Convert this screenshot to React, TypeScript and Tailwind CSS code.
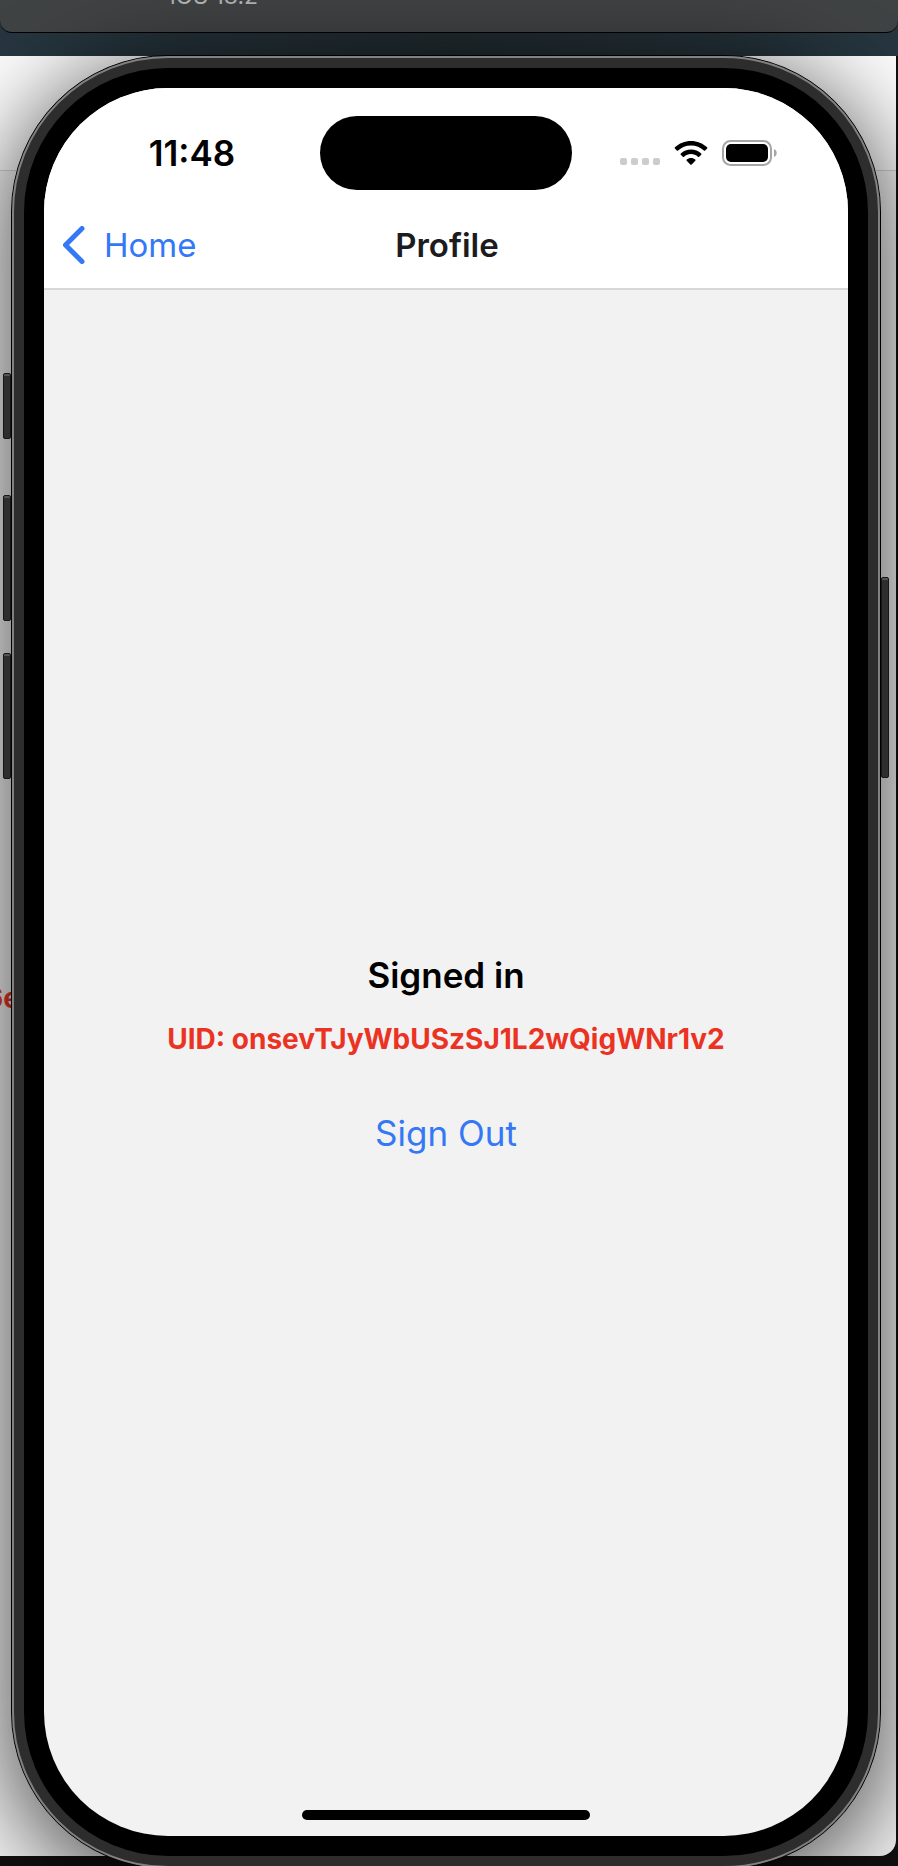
import React from "react";

function WifiIcon() {
  return (
    <svg width="34" height="26" viewBox="0 0 34 26" fill="#000" aria-hidden="true">
      <path d="M17 1C10.800 1 5.100 3.400 0.900 7.300c-.4.400-.4.900 0 1.300l1.900 1.900c.4.400.9.400 1.300 0C7.500 7.400 12 5.500 17 5.500s9.500 1.900 12.900 5c.4.400.9.400 1.300 0l1.900-1.900c.4-.4.400-.9 0-1.300C28.900 3.400 23.200 1 17 1z" />
      <path d="M17 9.500c-3.900 0-7.500 1.500-10.200 4-.4.400-.4.900 0 1.300l2 1.900c.4.400.9.400 1.300 0 1.800-1.700 4.200-2.700 6.900-2.700s5.100 1 6.900 2.700c.4.400.9.400 1.300 0l2-1.900c.4-.4.400-.9 0-1.300-2.700-2.500-6.300-4-10.200-4z" />
      <path d="M17 18c-1.600 0-3.100.6-4.300 1.500-.4.400-.4.900 0 1.300l3.600 3.600c.4.400 1 .4 1.400 0l3.600-3.600c.4-.4.400-.9 0-1.300C20.100 18.600 18.600 18 17 18z" />
    </svg>
  );
}

function BatteryIcon() {
  return (
    <svg width="56" height="26" viewBox="0 0 56 26" aria-hidden="true">
      <rect x="1" y="1" width="48" height="24" rx="7.500" fill="none" stroke="#a6a6a6" strokeWidth="2" />
      <rect x="4" y="4" width="42" height="18" rx="5" fill="#000" />
      <path d="M52 9v8c1.700-.7 2.700-2.200 2.700-4S53.700 9.700 52 9z" fill="#a6a6a6" />
    </svg>
  );
}

function StatusBar() {
  return (
    <div className="grid h-[114px] grid-cols-[1fr_252px_1fr] items-start pt-7">
      <div className="flex h-[74px] items-center justify-center pl-5">
        <time className="text-[35px] leading-[40px] font-semibold text-black">11:48</time>
      </div>
      <div className="h-[74px] rounded-[37px] bg-black" />
      <div className="flex h-[74px] items-center pl-12">
        <div className="flex gap-1 pt-4">
          {[0, 1, 2, 3].map((dot) => (
            <span key={dot} className="size-[7px] rounded-[2px] bg-[#cccccc]" />
          ))}
        </div>
        <div className="flex pl-[14px]">
          <WifiIcon />
        </div>
        <div className="flex pl-[14px]">
          <BatteryIcon />
        </div>
      </div>
    </div>
  );
}

function NavigationBar() {
  return (
    <nav className="grid h-[88px] grid-cols-3 items-center border-b-2 border-[#d8d8d8] pr-4 pl-[18px]">
      <a href="#home" className="flex items-center gap-[18px] text-[33px] leading-[40px] text-[#3478f6]">
        <svg width="24" height="38" viewBox="0 0 24 38" fill="none" stroke="currentColor" strokeWidth="5" strokeLinecap="round" strokeLinejoin="round" aria-hidden="true">
          <path d="M20 2.500L3.500 19L20 35.500" />
        </svg>
        Home
      </a>
      <h1 className="text-center text-[33px] leading-[40px] font-semibold text-[#1c1c1e]">Profile</h1>
    </nav>
  );
}

function ProfileScreen() {
  return (
    <main className="flex flex-1 flex-col items-center justify-center pt-2">
      <h2 className="text-[35px] leading-[44px] font-semibold text-black">Signed in</h2>
      <p className="mt-6 text-[28px] leading-[36px] font-bold text-[#eb3323]">UID: onsevTJyWbUSzSJ1L2wQigWNr1v2</p>
      <button type="button" className="mt-[54px] text-[35px] leading-[44px] text-[#3478f6]">
        Sign Out
      </button>
    </main>
  );
}

function SideButton({ className }: { className: string }) {
  return (
    <span className={`absolute w-2 rounded-[2px] border border-[#161616] bg-[#2e2e2e] shadow-[inset_0_2px_0_#555] ${className}`} />
  );
}

function Phone() {
  return (
    <div className="relative flex flex-1 flex-col rounded-[157px] border border-black bg-[#2d2d2d] shadow-[0_16px_84px_10px_rgba(0,0,0,0.6)]">
      <SideButton className="top-[317px] -left-[9px] h-[66px]" />
      <SideButton className="top-[439px] -left-[9px] h-[126px]" />
      <SideButton className="top-[597px] -left-[9px] h-[126px]" />
      <SideButton className="top-[521px] -right-[9px] h-[201px]" />
      <div className="relative flex flex-1 flex-col rounded-[156px] border-2 border-[#818181] bg-[#2d2d2d] p-[10px]">
        <div className="flex flex-1 flex-col rounded-[144px] bg-black p-5">
          <div className="flex flex-1 flex-col overflow-hidden rounded-[124px] bg-[#f2f2f2]">
            <header className="bg-white">
              <StatusBar />
              <NavigationBar />
            </header>
            <ProfileScreen />
            <div className="mx-auto mb-4 h-[10px] w-[288px] rounded-full bg-black" />
          </div>
        </div>
      </div>
    </div>
  );
}

function Desktop() {
  return (
    <div className="absolute inset-0 flex flex-col bg-[#101010]">
      <div className="flex h-[56px] flex-col bg-linear-to-r from-[#26353f] via-[#1f2a2e] to-[#26353f]">
        <div className="h-[33px] overflow-hidden rounded-b-xl border-b border-black bg-[#404344] pl-[170px]">
          <p className="-mt-[18px] text-[23px] leading-[28px] text-[#b4b5b5]">iOS 18.2</p>
        </div>
      </div>
      <div className="mr-[2px] mb-[10px] flex flex-1 flex-col overflow-hidden rounded-br-2xl bg-[#f1f1f1]">
        <div className="h-[115px] border-b border-[#d0d0d0] bg-[#fafafa]" />
        <p className="mt-[809px] -ml-[15px] text-[28px] leading-[36px] font-bold text-[#eb3323]">6e</p>
      </div>
    </div>
  );
}

export default function App() {
  return (
    <div className="relative flex h-screen flex-col overflow-hidden font-[Inter,'Liberation_Sans',sans-serif]">
      <Desktop />
      <div className="relative -mb-[3px] flex flex-1 flex-col pt-[55px] pr-[17px] pl-[11px]">
        <Phone />
      </div>
    </div>
  );
}
